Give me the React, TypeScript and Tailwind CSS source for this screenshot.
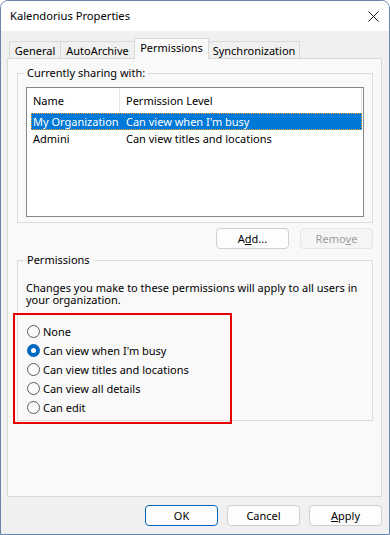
import React from "react";

const ROWS = [
  { name: "My Organization", level: "Can view when I'm busy", selected: true },
  { name: "Admini", level: "Can view titles and locations", selected: false },
];

const OPTIONS = [
  "None",
  "Can view when I'm busy",
  "Can view titles and locations",
  "Can view all details",
  "Can edit",
];

const TABS = [
  { label: "General", w: "w-[52px]" },
  { label: "AutoArchive", w: "w-[75px]" },
  { label: "Permissions", w: "w-[75px]" },
  { label: "Synchronization", w: "w-[92px]" },
];

function Radio({ checked }: { checked: boolean }) {
  if (checked) {
    return (
      <span className="w-[13px] h-[13px] rounded-full bg-[#0067c0] flex items-center justify-center shrink-0">
        <span className="w-[5px] h-[5px] rounded-full bg-white" />
      </span>
    );
  }
  return <span className="w-[13px] h-[13px] rounded-full border border-[#5c5c5c] bg-[#fbfbfb] shrink-0" />;
}

function Button({ children, variant }: { children: React.ReactNode; variant?: "default" | "disabled" }) {
  const cls =
    variant === "default"
      ? "border-[#0067c0] bg-[#fdfdfd] text-black"
      : variant === "disabled"
      ? "border-[#e5e5e5] bg-[#f5f5f5] text-[#9d9d9d]"
      : "border-[#d0d0d0] bg-[#fdfdfd] text-black";
  return (
    <div className={`w-[73px] h-[21px] rounded-[4px] border flex items-center justify-center ${cls}`}>
      {children}
    </div>
  );
}

export default function App() {
  return (
    <div className="relative w-[390px] h-[535px] flex flex-col border border-[#6586aa] rounded-t-[8px] bg-[#f0f0f0] overflow-hidden font-['Segoe_UI','Noto_Sans',sans-serif] text-[11px] text-black leading-[16px]">
      {/* title bar */}
      <div className="h-[30px] bg-white flex items-center justify-between pl-[9px] pr-[9px] shrink-0">
        <span className="text-[11.2px]">Kalendorius Properties</span>
        <svg width="11" height="11" viewBox="0 0 11 11" className="mr-[1px]">
          <path d="M0.5 0.5 L10.5 10.5 M10.5 0.5 L0.5 10.5" stroke="#1a1a1a" strokeWidth="1" />
        </svg>
      </div>

      <div className="flex-1 flex flex-col pl-[6px] pr-[7px]">
        {/* tabs */}
        <div className="flex items-end h-[20px] mt-[7px] pl-[2px] relative z-10">
          {TABS.map((t, i) =>
            t.label === "Permissions" ? (
              <div
                key={t.label}
                className={`${t.w} h-[21px] -ml-px -mb-px border border-b-0 border-[#d9d9d9] bg-[#f9f9f9] flex justify-center pt-[1px]`}
              >
                {t.label}
              </div>
            ) : (
              <div
                key={t.label}
                className={`${t.w} h-[17px] ${i === 0 ? "" : "-ml-px"} border border-b-0 border-[#d9d9d9] bg-[#f0f0f0] flex justify-center pt-[1px]`}
              >
                {t.label}
              </div>
            )
          )}
        </div>

        {/* panel */}
        <div className="h-[439px] border border-[#d9d9d9] bg-[#f9f9f9] pl-[9px] pr-[8px] pt-[6px] flex flex-col">
          <fieldset className="border border-[#dcdcdc] px-[8px] pt-[6px] pb-[5px]">
            <legend className="-ml-[2px] px-[3px]">Currently sharing with:</legend>
            <div className="h-[130px] border border-[#828790] bg-white pl-[4px] pr-[1px]">
              <div className="h-[25px] flex items-center">
                <div className="w-[89px] pl-[2px] h-full flex items-center border-r border-[#e5e5e5]">Name</div>
                <div className="pl-[6px] flex-1 h-full flex items-center border-r border-[#e5e5e5]">Permission Level</div>
              </div>
              {ROWS.map((r) => (
                <div
                  key={r.name}
                  className={`h-[17px] flex items-center ${
                    r.selected
                      ? "bg-[#0078d7] text-white outline-1 outline-dotted outline-[#f0a030] -outline-offset-1"
                      : ""
                  }`}
                >
                  <div className="w-[89px] pl-[2px] whitespace-nowrap">{r.name}</div>
                  <div className="pl-[6px] whitespace-nowrap">{r.level}</div>
                </div>
              ))}
            </div>
          </fieldset>

          <div className="flex justify-end gap-[11px] mt-[5px]">
            <Button>
              A<span className="underline">d</span>d...
            </Button>
            <Button variant="disabled">
              Remo<span className="underline">v</span>e
            </Button>
          </div>

          <fieldset className="border border-[#dcdcdc] px-[8px] pt-[14px] pb-[3px] mt-[3px]">
            <legend className="-ml-[2px] px-[3px]">Permissions</legend>
            <p className="leading-[12px]">
              Changes you make to these permissions will apply to all users in your organization.
            </p>
            <div className="mt-[16px] flex flex-col">
              {OPTIONS.map((o, i) => (
                <div key={o} className="h-[19px] flex items-center gap-[3px] pl-[1px]">
                  <Radio checked={i === 1} />
                  <span>{o}</span>
                </div>
              ))}
            </div>
          </fieldset>
        </div>

        {/* bottom buttons */}
        <div className="flex justify-end gap-[9px] mt-[8px]">
          <Button variant="default">OK</Button>
          <Button>Cancel</Button>
          <Button>
            <span className="underline">A</span>pply
          </Button>
        </div>
      </div>

      {/* red annotation frame */}
      <div className="absolute left-[12px] top-[312px] w-[219px] h-[111px] border-2 border-[#e60000]" />
    </div>
  );
}
